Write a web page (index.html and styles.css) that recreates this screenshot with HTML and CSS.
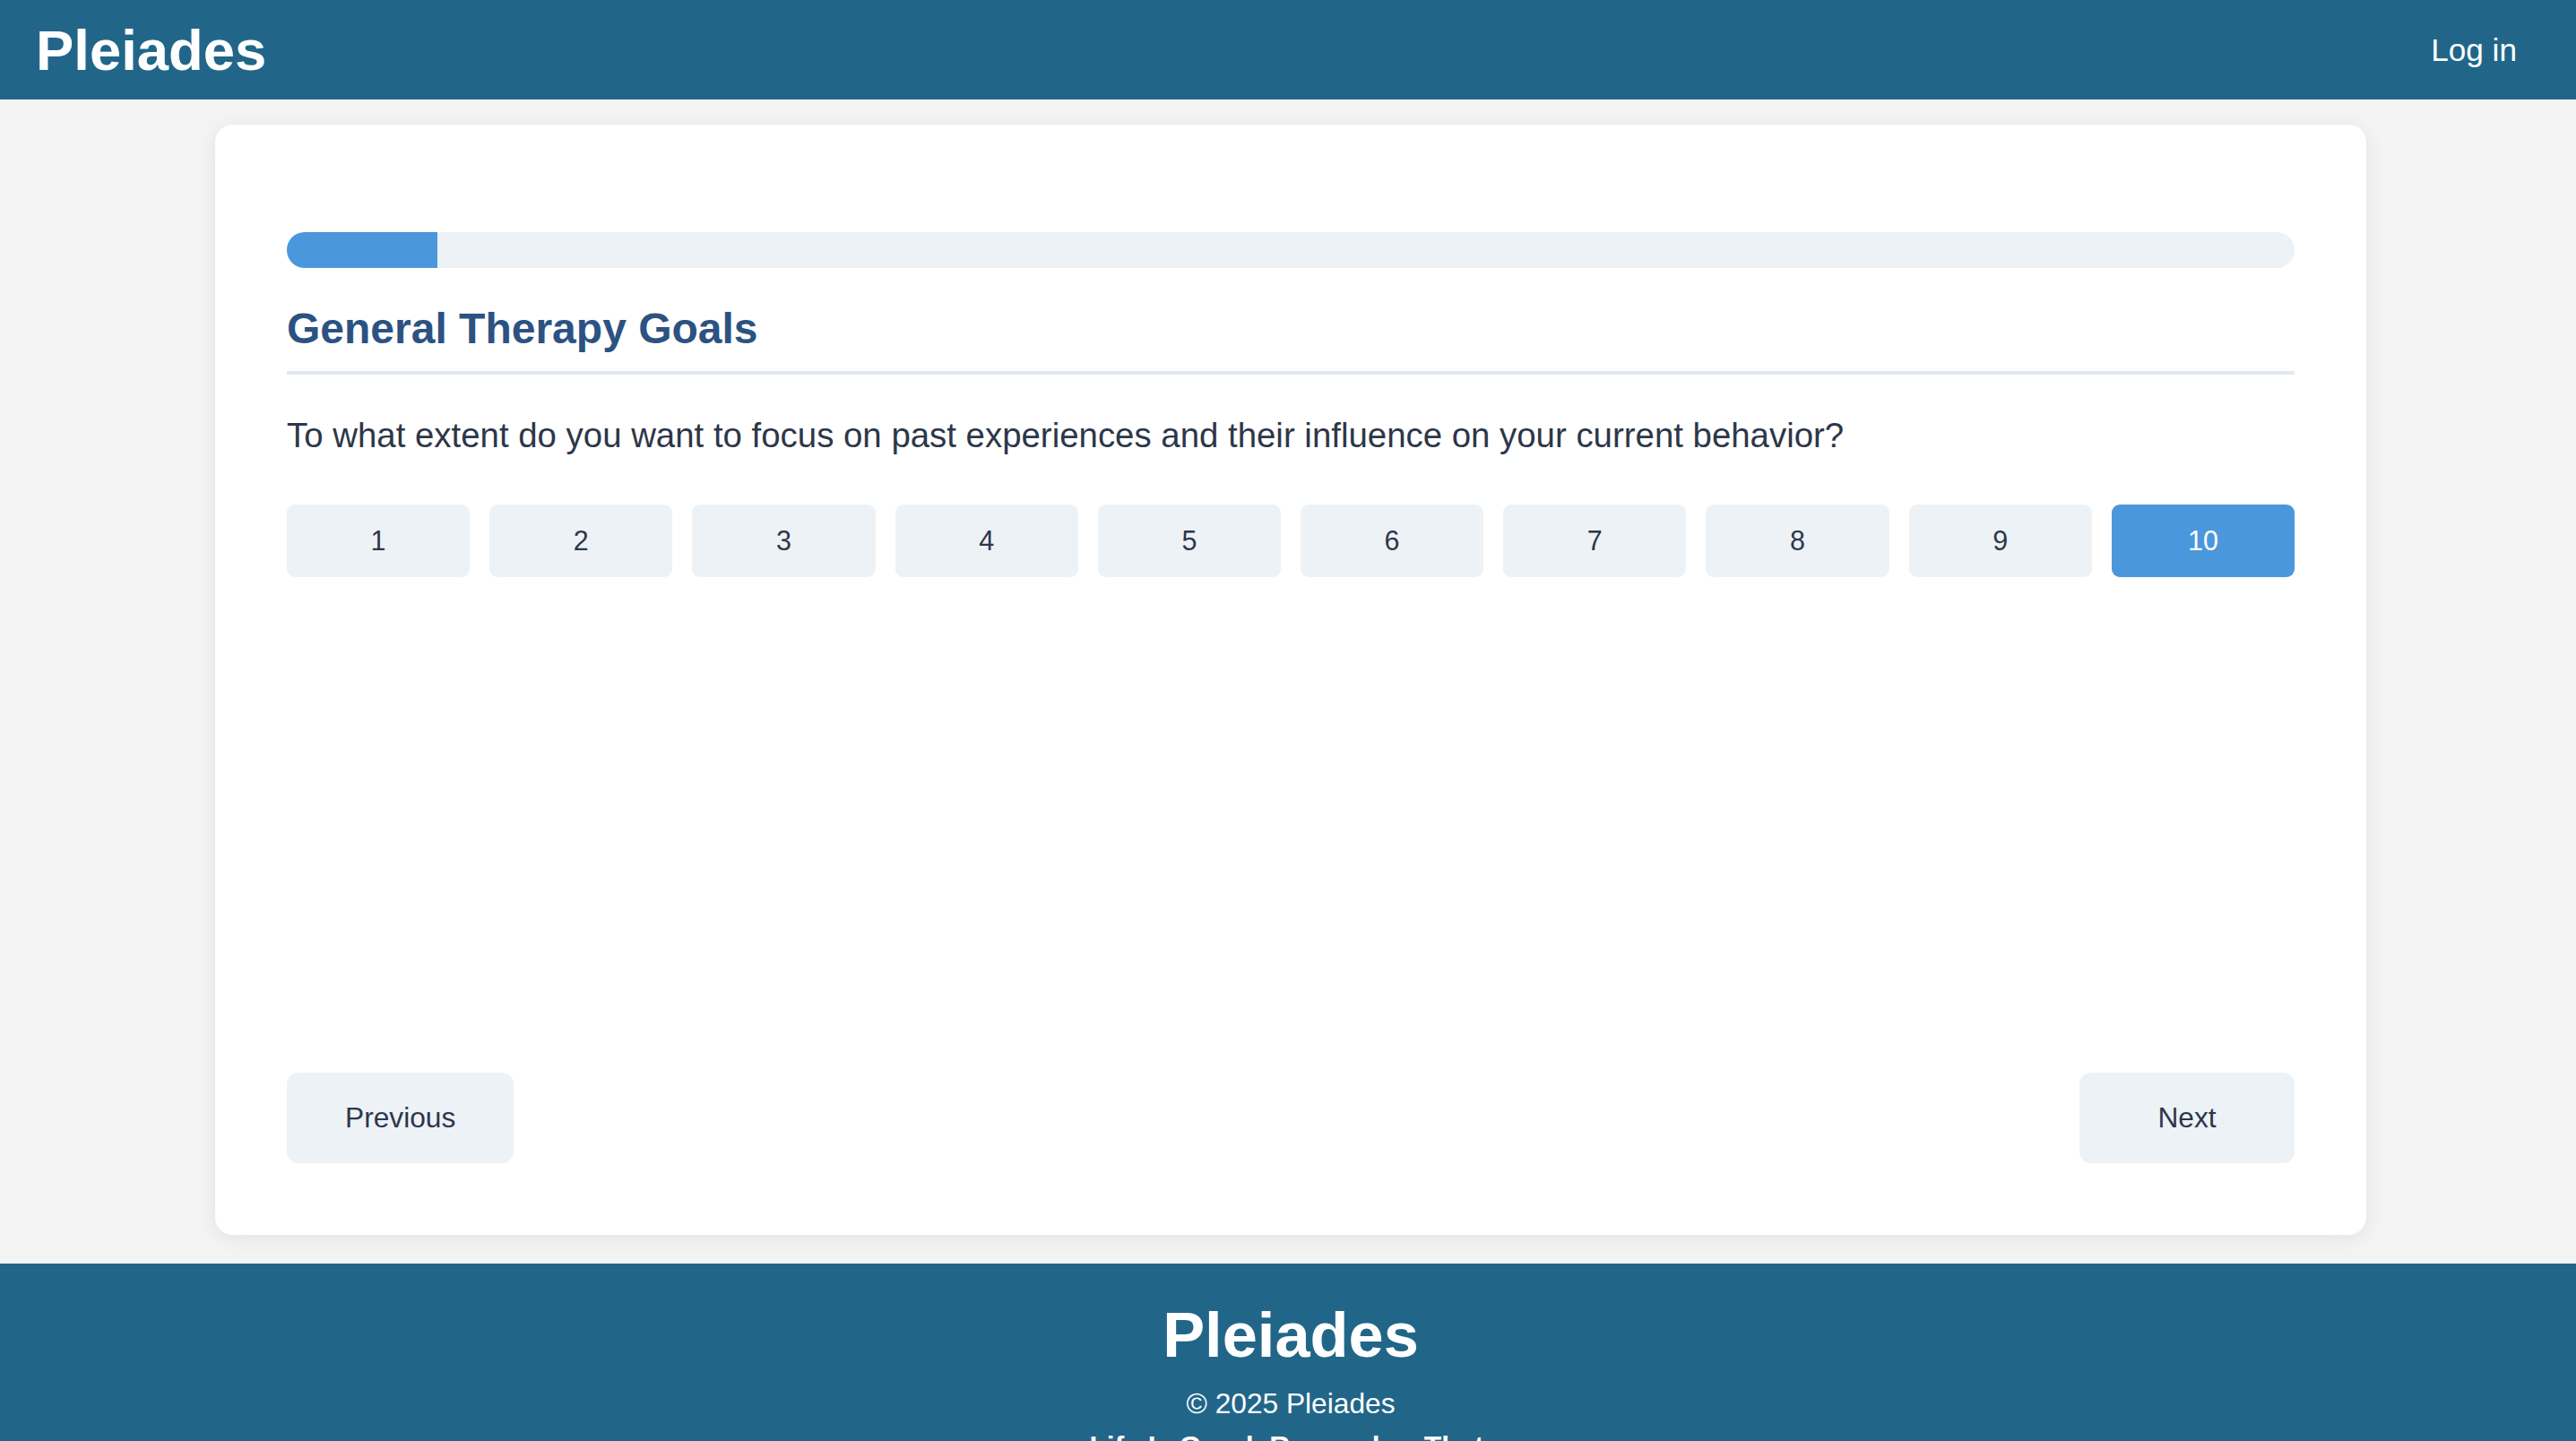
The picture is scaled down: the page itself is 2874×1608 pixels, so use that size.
FILE: index.html
```html
<!DOCTYPE html>
<html lang="en">
<head>
<meta charset="utf-8">
<title>Pleiades</title>
<link rel="stylesheet" href="styles.css">
</head>
<body>
<header class="site-header">
  <a class="logo" href="#">Pleiades</a>
  <nav class="site-nav"><a class="login" href="#">Log in</a></nav>
</header>
<main class="page">
  <section class="card">
    <div class="progress"><div class="progress-fill" style="width:7.5%"></div></div>
    <h2 class="section-title">General Therapy Goals</h2>
    <p class="question">To what extent do you want to focus on past experiences and their influence on your current behavior?</p>
    <div class="scale">
      <button class="scale-btn">1</button>
      <button class="scale-btn">2</button>
      <button class="scale-btn">3</button>
      <button class="scale-btn">4</button>
      <button class="scale-btn">5</button>
      <button class="scale-btn">6</button>
      <button class="scale-btn">7</button>
      <button class="scale-btn">8</button>
      <button class="scale-btn">9</button>
      <button class="scale-btn is-selected">10</button>
    </div>
    <div class="nav-row">
      <button class="nav-btn">Previous</button>
      <button class="nav-btn">Next</button>
    </div>
  </section>
</main>
<footer class="site-footer">
  <h2 class="footer-logo">Pleiades</h2>
  <p class="copyright">© 2025 Pleiades</p>
  <p class="tagline">Life Is Good. Remember That.</p>
</footer>
</body>
</html>
```
FILE: styles.css
```css
html, body {
  margin: 0;
  padding: 0;
}
body {
  background: #f4f4f4;
  font-family: "Liberation Sans", Arial, sans-serif;
  color: #2d3748;
}
.site-header {
  height: 111px;
  background: #216689;
  display: flex;
  align-items: center;
  justify-content: space-between;
  padding: 0 40px;
  box-sizing: border-box;
}
.logo {
  color: #ffffff;
  font-weight: 700;
  font-size: 63.4px;
  text-decoration: none;
  line-height: normal;
}
.login {
  color: #ffffff;
  font-size: 35.2px;
  text-decoration: none;
  padding: 0 26px 0 24px;
}
.page {
  padding: 28px 234px 32px 240px;
}
.card {
  background: #ffffff;
  border-radius: 20px;
  box-shadow: 0 4px 24px rgba(0, 0, 0, 0.08);
  box-sizing: border-box;
  min-height: 1239px;
  padding: 120px 80px 80px;
  display: flex;
  flex-direction: column;
}
.progress {
  height: 40px;
  background: #edf2f7;
  border-radius: 20px;
  overflow: hidden;
}
.progress-fill {
  height: 100%;
  background: #4a98db;
}
.section-title {
  margin: 40px 0 0;
  font-size: 48px;
  font-weight: 700;
  color: #2c5282;
  line-height: normal;
  padding-bottom: 20px;
  border-bottom: 4px solid #e2e8f0;
}
.question {
  margin: 46px 0 0;
  font-size: 38.4px;
  line-height: normal;
  color: #2d3748;
}
.scale {
  margin-top: 55px;
  display: grid;
  grid-template-columns: repeat(10, 1fr);
  gap: 22px;
}
.scale-btn {
  height: 81px;
  border: none;
  border-radius: 9px;
  background: #edf2f7;
  color: #2d3748;
  font-family: "Liberation Sans", Arial, sans-serif;
  font-size: 30.5px;
  padding: 0;
}
.scale-btn.is-selected {
  background: #4a98db;
  color: #ffffff;
}
.nav-row {
  margin-top: auto;
  display: flex;
  justify-content: space-between;
}
.nav-btn {
  height: 101px;
  min-width: 240px;
  padding: 0 65px;
  border: none;
  border-radius: 13px;
  background: #edf2f7;
  color: #2d3748;
  font-family: "Liberation Sans", Arial, sans-serif;
  font-size: 31.7px;
}
.site-footer {
  background: #216689;
  color: #ffffff;
  text-align: center;
  padding: 39px 37px 40px 43px;
}
.footer-logo {
  margin: 0 0 13px;
  font-size: 70.4px;
  font-weight: 700;
  line-height: normal;
}
.copyright {
  margin: 0;
  font-size: 31.7px;
  line-height: 1.5;
}
.tagline {
  margin: 0;
  font-size: 31.7px;
  line-height: 1.5;
  font-weight: 700;
}
```
